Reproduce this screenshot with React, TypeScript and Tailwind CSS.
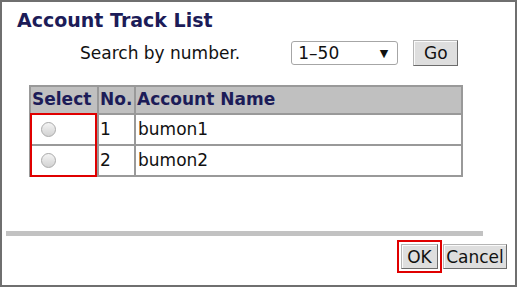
import { useState } from "react";

const rows = [
  { no: 1, name: "bumon1" },
  { no: 2, name: "bumon2" },
];

export default function App() {
  const [selected, setSelected] = useState<number | null>(null);

  return (
    <div
      className="w-[517px] h-[287px] border-2 border-[#6f6f6f] bg-white flex flex-col text-[#111]"
      style={{ fontFamily: '"DejaVu Sans", "Liberation Sans", sans-serif' }}
    >
      <div className="pl-[15px] pt-[7px] text-[19px] leading-[22px] font-bold text-[#1c1c58]">
        Account Track List
      </div>

      <div className="mt-[9px] flex items-center h-[26px] pl-[78px]">
        <span className="text-[17px] leading-[26px]">Search by number.</span>
        <div className="ml-[51px] w-[107px] h-[24px] border border-[#a6a6a6] rounded-[3px] bg-white flex items-center justify-between pl-[6px] pr-[9px]">
          <span className="text-[17px] leading-[22px]">1–50</span>
          <span className="text-[11px] leading-none">▼</span>
        </div>
        <button className="ml-[15px] w-[45px] h-[26px] bg-[#dedede] border border-[#b5b5b5] border-r-[#6c6c6c] border-b-[#6c6c6c] shadow-[inset_1px_1px_0_#fafafa] text-[17px] leading-[22px]">
          Go
        </button>
      </div>

      <div className="relative ml-[27px] mt-[19px] w-[434px]">
        <table className="w-[434px] border-collapse border-2 border-[#999] text-[17px]">
          <thead>
            <tr className="bg-[#c0c0c0] h-[28px]">
              <th className="w-[68px] border-2 border-[#999] text-left pl-[1px] font-bold text-[#1c1c58]">
                Select
              </th>
              <th className="w-[37px] border-2 border-[#999] text-left pl-[1px] font-bold text-[#1c1c58]">
                No.
              </th>
              <th className="border-2 border-[#999] text-left pl-[1px] font-bold text-[#1c1c58]">
                Account Name
              </th>
            </tr>
          </thead>
          <tbody>
            {rows.map((r) => (
              <tr key={r.no} className="h-[31px]">
                <td className="border-2 border-[#999] pl-[10px]">
                  <input
                    type="radio"
                    name="account"
                    checked={selected === r.no}
                    onChange={() => setSelected(r.no)}
                    className="appearance-none block w-[15px] h-[15px] rounded-full border border-[#ababab] bg-gradient-to-b from-[#f4f4f4] to-[#d2d2d2]"
                  />
                </td>
                <td className="border-2 border-[#999] pl-[1px]">{r.no}</td>
                <td className="border-2 border-[#999] pl-[2px]">{r.name}</td>
              </tr>
            ))}
          </tbody>
        </table>
        <div className="absolute left-[1px] top-[28px] w-[67px] h-[64px] border-2 border-[#e00000] pointer-events-none" />
      </div>

      <div className="ml-[4px] mt-[54px] w-[477px] h-[5px] bg-[#c2c2c2]" />

      <div className="mt-[8px] flex justify-end gap-[5px] pr-[8px]">
        <button className="w-[37px] h-[25px] bg-[#dedede] border border-[#b5b5b5] border-r-[#6c6c6c] border-b-[#6c6c6c] shadow-[inset_1px_1px_0_#fafafa] text-[17px] leading-[22px] outline-2 outline-[#e00000] outline-offset-2">
          OK
        </button>
        <button className="w-[64px] h-[25px] bg-[#dedede] border border-[#b5b5b5] border-r-[#6c6c6c] border-b-[#6c6c6c] shadow-[inset_1px_1px_0_#fafafa] text-[17px] leading-[22px]">
          Cancel
        </button>
      </div>
    </div>
  );
}
